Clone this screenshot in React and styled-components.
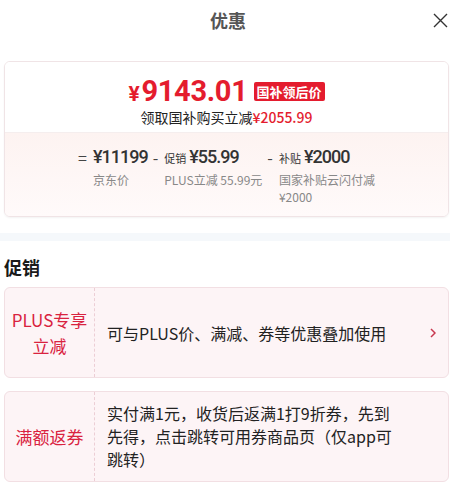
import React from 'react';
import styled, { createGlobalStyle } from 'styled-components';

const GlobalStyle = createGlobalStyle`
  body {
    margin: 0;
    background: #fff;
    font-family: "Noto Sans CJK SC", "Noto Sans", sans-serif;
    color: #222;
  }
`;

function CloseIcon() {
  return (
    <svg width="15" height="15" viewBox="0 0 15 15">
      <path d="M1 1 L14 14 M14 1 L1 14" stroke="#333" strokeWidth="1.4" fill="none" />
    </svg>
  );
}

function Chevron() {
  return (
    <svg width="6" height="10" viewBox="0 0 6 10">
      <path d="M1 1 L5 5 L1 9" stroke="#c8374f" strokeWidth="1.5" fill="none" />
    </svg>
  );
}

const parts = [
  { op: '=', label: '', price: '¥11199', note: '京东价' },
  { op: '-', label: '促销', price: '¥55.99', note: 'PLUS立减 55.99元' },
  { op: '-', label: '补贴', price: '¥2000', note: '国家补贴云闪付减 ¥2000', narrow: true },
];

const rebateLines = [
  '实付满1元，收货后返满1打9折券，先到',
  '先得，点击跳转可用券商品页（仅app可',
  '跳转）',
];

function App() {
  return (
    <Page>
      <GlobalStyle />
      <Header>
        <span />
        <Title>优惠</Title>
        <Close>
          <CloseIcon />
        </Close>
      </Header>

      <PriceCard>
        <PriceTop>
          <PriceRow>
            <BigPrice>
              <Yen>¥</Yen>9143.01
            </BigPrice>
            <Badge>国补领后价</Badge>
          </PriceRow>
          <SubLine>
            领取国补购买立减<Red>¥2055.99</Red>
          </SubLine>
        </PriceTop>
        <Breakdown>
          {parts.map((p) => (
            <Part key={p.price}>
              <Op>{p.op}</Op>
              <PartBody $narrow={p.narrow}>
                <PartTop>
                  {p.label && <PartLabel>{p.label}</PartLabel>}
                  <PartPrice>{p.price}</PartPrice>
                </PartTop>
                <PartNote>{p.note}</PartNote>
              </PartBody>
            </Part>
          ))}
        </Breakdown>
      </PriceCard>

      <Band />

      <SectionTitle>促销</SectionTitle>

      <PromoCard>
        <PromoTag>
          PLUS专享
          <br />
          立减
        </PromoTag>
        <PromoBody>
          <PromoText>可与PLUS价、满减、券等优惠叠加使用</PromoText>
          <Chevron />
        </PromoBody>
      </PromoCard>

      <PromoCard $gap>
        <PromoTag>满额返券</PromoTag>
        <PromoBody>
          <PromoText>
            {rebateLines.map((line) => (
              <TextLine key={line}>{line}</TextLine>
            ))}
          </PromoText>
        </PromoBody>
      </PromoCard>
    </Page>
  );
}

export default App;

const Page = styled.div`
  width: 450px;
  height: 493px;
  overflow: hidden;
`;

const Header = styled.div`
  height: 40px;
  display: grid;
  grid-template-columns: 1fr auto 1fr;
  align-items: center;
`;

const Title = styled.div`
  font-size: 18px;
  font-weight: 700;
  color: #555;
  padding-left: 6px;
`;

const Close = styled.div`
  justify-self: end;
  display: flex;
  padding-right: 2px;
`;

const PriceCard = styled.div`
  margin: 21px 1px 0 4px;
  border: 1px solid #f0e4e6;
  border-radius: 6px;
  overflow: hidden;
  box-shadow: 0 1px 2px rgba(0, 0, 0, 0.05);
`;

const PriceTop = styled.div`
  background: #fff;
  padding: 13px 0 5px;
  border-bottom: 1px solid #f5eeee;
  display: flex;
  flex-direction: column;
  align-items: center;
`;

const PriceRow = styled.div`
  display: flex;
  align-items: center;
  gap: 6px;
  height: 32px;
`;

const BigPrice = styled.div`
  font-family: Roboto, "Noto Sans", sans-serif;
  font-size: 29px;
  font-weight: 700;
  color: #e41c2e;
  letter-spacing: -0.3px;
`;

const Yen = styled.span`
  font-size: 21px;
  margin-right: 2px;
`;

const Badge = styled.div`
  background: #e41c2e;
  color: #fff;
  font-size: 13px;
  font-weight: 700;
  line-height: 19px;
  padding: 0 3px;
  border-radius: 2px;
`;

const SubLine = styled.div`
  font-size: 14px;
  line-height: 20px;
  color: #222;
`;

const Red = styled.span`
  color: #e41c2e;
  font-weight: 500;
`;

const Breakdown = styled.div`
  background: linear-gradient(180deg, #fdf3f1 0%, #fffafa 100%);
  padding: 13px 0 11px 4px;
  display: flex;
  justify-content: center;
  gap: 5px;
`;

const Part = styled.div`
  display: flex;
  gap: 6px;
`;

const Op = styled.div`
  font-size: 16px;
  line-height: 22px;
  color: #444;
`;

const PartBody = styled.div`
  width: ${(p) => (p.$narrow ? '100px' : 'auto')};
`;

const PartTop = styled.div`
  display: flex;
  align-items: baseline;
  gap: 3px;
  height: 22px;
`;

const PartLabel = styled.span`
  font-size: 11px;
  color: #333;
`;

const PartPrice = styled.span`
  font-family: Roboto, "Noto Sans", sans-serif;
  font-size: 18px;
  font-weight: 500;
  color: #333;
  letter-spacing: -1px;
  line-height: 22px;
`;

const PartNote = styled.div`
  margin-top: 3px;
  font-size: 12px;
  line-height: 17px;
  color: #888;
`;

const Band = styled.div`
  margin-top: 16px;
  height: 8px;
  background: #f5f8fb;
`;

const SectionTitle = styled.div`
  margin-top: 14px;
  padding-left: 4px;
  font-size: 18px;
  font-weight: 700;
  line-height: 24px;
  color: #1a1a1a;
`;

const PromoCard = styled.div`
  margin: ${(p) => (p.$gap ? '13px' : '8px')} 1px 0 4px;
  height: 91px;
  box-sizing: border-box;
  border: 1px solid #f2dfe3;
  border-radius: 6px;
  background: #fdf4f6;
  display: grid;
  grid-template-columns: 90px 1fr;
`;

const PromoTag = styled.div`
  border-right: 1px dashed #ecced5;
  display: flex;
  align-items: center;
  justify-content: center;
  text-align: center;
  font-size: 17px;
  line-height: 26px;
  color: #d9223f;
`;

const PromoBody = styled.div`
  display: flex;
  align-items: center;
  justify-content: space-between;
  padding: 0 12px 0 12px;
`;

const PromoText = styled.div`
  font-size: 16px;
  line-height: 22px;
  color: #222;
`;

const TextLine = styled.div`
  white-space: nowrap;
  line-height: 23px;
`;
